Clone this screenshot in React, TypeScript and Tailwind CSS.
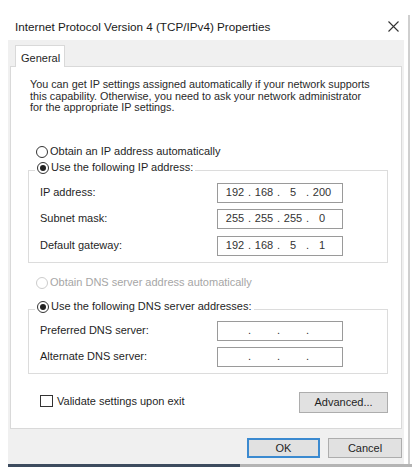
import React from 'react'

const font = { fontFamily: '"Liberation Sans", Arial, sans-serif' }

function Radio({ checked, disabled }: { checked?: boolean; disabled?: boolean }) {
  return (
    <span
      className={`flex h-[12px] w-[12px] items-center justify-center rounded-full border bg-white ${
        disabled ? 'border-[#cccccc]' : 'border-[#333333]'
      }`}
    >
      {checked && <span className="h-[6px] w-[6px] rounded-full bg-[#222222]" />}
    </span>
  )
}

function IpBox({ parts }: { parts?: string[] }) {
  const p = parts ?? ['', '', '', '']
  return (
    <div className="flex h-[20px] w-[126px] items-center border border-[#9a9a9a] bg-white pl-[5px] text-[11px] text-[#333333]">
      {p.map((v, i) => (
        <React.Fragment key={i}>
          <span className="w-[24px] text-center">{v}</span>
          {i < 3 && <span className="w-[5px] text-center">.</span>}
        </React.Fragment>
      ))}
    </div>
  )
}

function Row({ label, parts, className }: { label: string; parts?: string[]; className?: string }) {
  return (
    <div className={`flex h-[20px] items-center pl-[11px] ${className ?? ''}`}>
      <span className="w-[177px] text-[11px] text-[#1f1f1f]">{label}</span>
      <IpBox parts={parts} />
    </div>
  )
}

export default function App() {
  return (
    <div className="flex h-[470px] w-[412px] flex-col overflow-hidden bg-white" style={font}>
      <div className="flex">
        <div className="flex w-[408px] flex-col">
          {/* title bar */}
          <div className="flex h-[40px] items-center justify-between pl-[15px] pr-[9px] pt-[14px]">
            <span className="text-[11.7px] text-[#1a1a1a]">Internet Protocol Version 4 (TCP/IPv4) Properties</span>
            <svg width="11" height="11" viewBox="0 0 11 11" className="mb-[1px]">
              <path d="M0.5 0.5 L10.5 10.5 M10.5 0.5 L0.5 10.5" stroke="#333" strokeWidth="1.1" />
            </svg>
          </div>

          {/* dialog body */}
          <div className="ml-[8px] flex h-[424px] w-[396px] flex-col bg-[#f0f0f0]">
            <div className="pl-[7px] pt-[5px]">
              <div className="relative z-10 mb-[-1px] h-[22px] w-[50px] border border-b-0 border-[#d9d9d9] bg-white pl-[5px] pt-[4px] text-[11px] text-[#1f1f1f]">
                General
              </div>
            </div>

            <div className="ml-[2px] h-[363px] w-[392px] border border-[#d9d9d9] bg-white">
              <p className="pl-[19px] pt-[12px] text-[10.8px] leading-[11.5px] text-[#2a2a2a]">
                You can get IP settings assigned automatically if your network supports
                <br />
                this capability. Otherwise, you need to ask your network administrator
                <br />
                for the appropriate IP settings.
              </p>

              <div className="mt-[31px] flex h-[14px] items-center gap-[2px] pl-[25px] text-[11px] text-[#1f1f1f]">
                <Radio />
                <span>Obtain an IP address automatically</span>
              </div>

              <fieldset className="ml-[17px] mt-[2px] w-[360px] border border-[#dcdcdc] pb-[6px]">
                <legend className="ml-[6px] px-[2px] pb-[6px]">
                  <span className="flex h-[14px] items-center gap-[2px] text-[11px] text-[#1f1f1f]">
                    <Radio checked />
                    <span>Use the following IP address:</span>
                  </span>
                </legend>
                <Row className="mt-[2px]" label="IP address:" parts={['192', '168', '5', '200']} />
                <Row className="mt-[6px]" label="Subnet mask:" parts={['255', '255', '255', '0']} />
                <Row className="mt-[7px]" label="Default gateway:" parts={['192', '168', '5', '1']} />
              </fieldset>

              <div className="mt-[13px] flex h-[14px] items-center gap-[2px] pl-[25px] text-[11px] text-[#a6a6a6]">
                <Radio disabled />
                <span>Obtain DNS server address automatically</span>
              </div>

              <fieldset className="ml-[17px] mt-[10px] w-[360px] border border-[#dcdcdc] pb-[6px]">
                <legend className="ml-[6px] px-[2px] pb-[6px]">
                  <span className="flex h-[14px] items-center gap-[2px] text-[11px] text-[#1f1f1f]">
                    <Radio checked />
                    <span>Use the following DNS server addresses:</span>
                  </span>
                </legend>
                <Row className="mt-[1px]" label="Preferred DNS server:" />
                <Row className="mt-[6px]" label="Alternate DNS server:" />
              </fieldset>

              <div className="mt-[18px] flex items-start justify-between pl-[29px] pr-[13px]">
                <div className="mt-[1px] flex items-center gap-[4px] text-[11px] text-[#1f1f1f]">
                  <span className="h-[12px] w-[13px] border border-[#333333] bg-white" />
                  <span>Validate settings upon exit</span>
                </div>
                <button className="h-[21px] w-[89px] border border-[#adadad] bg-[#e1e1e1] text-[11px] text-[#1f1f1f]">
                  Advanced...
                </button>
              </div>
            </div>

            <div className="mt-[9px] flex justify-end gap-[8px] pr-[2px]">
              <button className="h-[20px] w-[73px] border-2 border-[#3b8ad0] bg-[#e1e1e1] text-[11px] text-[#1f1f1f]">
                OK
              </button>
              <button className="h-[20px] w-[74px] border border-[#adadad] bg-[#e1e1e1] text-[11px] text-[#1f1f1f]">
                Cancel
              </button>
            </div>
          </div>
        </div>
        <div className="mt-[15px] w-[2px] bg-[#cfcfcf]" />
      </div>

      {/* bottom edge */}
      <div className="ml-[8px] flex h-[3px]">
        <div className="w-[232px] bg-[#3d4b5e]" />
        <div className="flex-1 bg-[#b4b4b4]" />
      </div>
    </div>
  )
}
